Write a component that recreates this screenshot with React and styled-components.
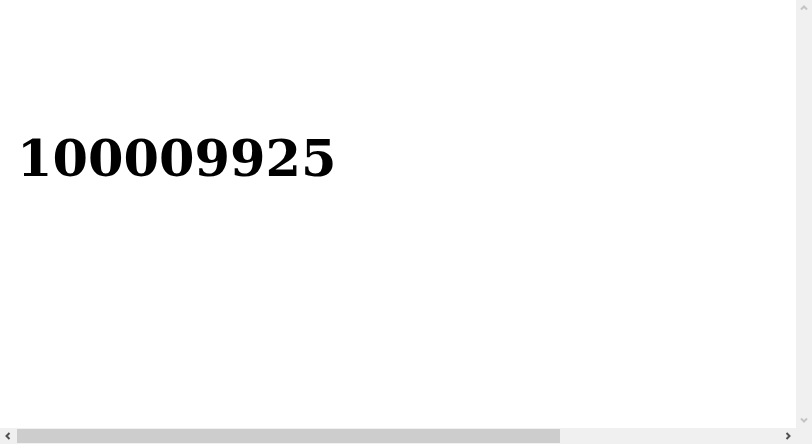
import React from 'react'
import styled, { createGlobalStyle } from 'styled-components'

const Global = createGlobalStyle`
  html, body {
    overflow: hidden;
    background: #fff;
  }
  body {
    margin: 8px;
    font-family: "DejaVu Serif", serif;
  }
`

function Chevron({ dir, color }) {
    const paths = {
        left: 'M5.5 1 L2.5 4 L5.5 7',
        right: 'M2.5 1 L5.5 4 L2.5 7',
        up: 'M1 5.5 L4 2.5 L7 5.5',
        down: 'M1 2.5 L4 5.5 L7 2.5',
    }
    return (
        <svg width="8" height="8" viewBox="0 0 8 8">
            <path d={paths[dir]} fill="none" stroke={color} strokeWidth="2" />
        </svg>
    )
}

function App() {
    return (
        <>
            <Global />
            <Page>
                <Counter>100009925</Counter>
            </Page>
            <VBar>
                <Arrow><Chevron dir="up" color="#c4c4c4" /></Arrow>
                <Arrow><Chevron dir="down" color="#c4c4c4" /></Arrow>
            </VBar>
            <HBar>
                <Arrow><Chevron dir="left" color="#505050" /></Arrow>
                <Track>
                    <Thumb />
                </Track>
                <Arrow><Chevron dir="right" color="#505050" /></Arrow>
            </HBar>
            <Corner />
        </>
    )
}

export default App

const Page = styled.div`
    padding: 120px 9px 0;
    display: flex;
    align-items: flex-start;
`
const Counter = styled.div`
    font-family: "DejaVu Serif", serif;
    font-weight: bold;
    font-size: 51px;
    line-height: 1.2;
    color: #000;
`
const VBar = styled.div`
    position: fixed;
    top: 0;
    right: 0;
    width: 16px;
    height: 428px;
    background: #f0f0f0;
    display: flex;
    flex-direction: column;
    justify-content: space-between;
`
const HBar = styled.div`
    position: fixed;
    left: 0;
    bottom: 0;
    width: 796px;
    height: 16px;
    background: #f0f0f0;
    display: flex;
    align-items: stretch;
`
const Corner = styled.div`
    position: fixed;
    right: 0;
    bottom: 0;
    width: 16px;
    height: 16px;
    background: #f0f0f0;
`
const Arrow = styled.div`
    width: 16px;
    height: 16px;
    flex: none;
    display: flex;
    align-items: center;
    justify-content: center;
`
const Track = styled.div`
    flex: 1;
    display: flex;
    align-items: center;
    padding: 0 1px;
`
const Thumb = styled.div`
    width: 543px;
    height: 14px;
    background: #cdcdcd;
`
